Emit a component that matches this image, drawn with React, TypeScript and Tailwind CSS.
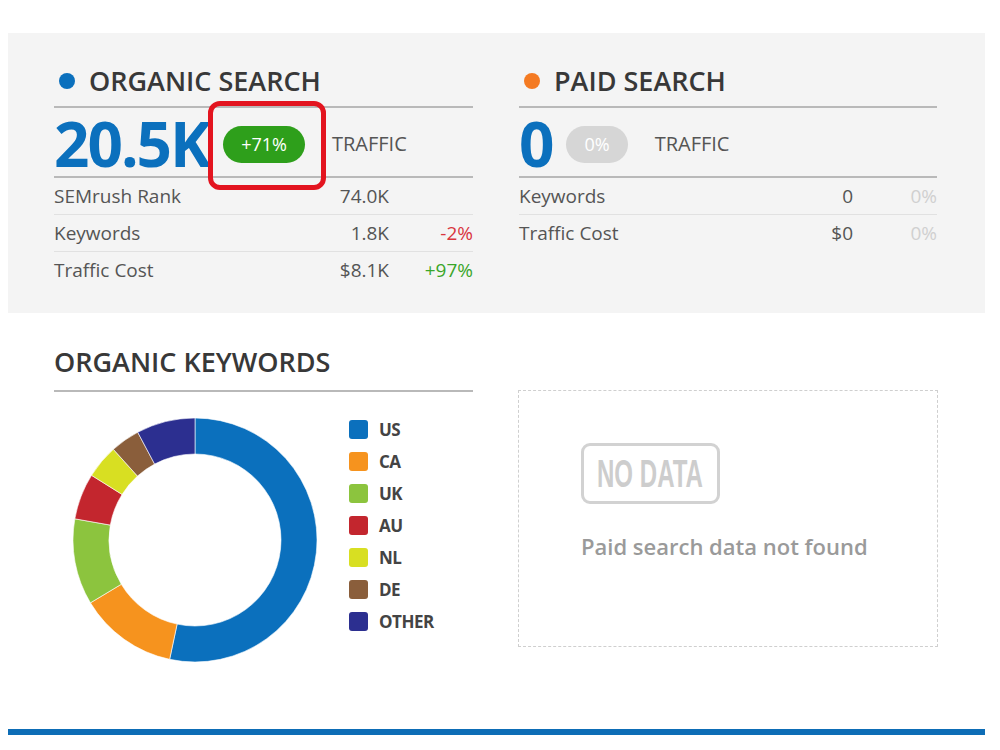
import React from "react";

const font = { fontFamily: '"Open Sans", "Noto Sans", sans-serif' };

const slices = [
  { label: "US", color: "#0b70bd", from: 0, to: 192 },
  { label: "CA", color: "#f6931e", from: 192, to: 239 },
  { label: "UK", color: "#8cc43e", from: 239, to: 280 },
  { label: "AU", color: "#c3262e", from: 280, to: 302 },
  { label: "NL", color: "#d8df22", from: 302, to: 318 },
  { label: "DE", color: "#8a5e3b", from: 318, to: 332 },
  { label: "OTHER", color: "#2c2f90", from: 332, to: 360 },
];

function polar(cx: number, cy: number, r: number, deg: number) {
  const a = ((deg - 90) * Math.PI) / 180;
  return [cx + r * Math.cos(a), cy + r * Math.sin(a)];
}

function arcPath(from: number, to: number) {
  const cx = 122;
  const cy = 122;
  const ro = 122;
  const ri = 86;
  const [x1, y1] = polar(cx, cy, ro, from);
  const [x2, y2] = polar(cx, cy, ro, to);
  const [x3, y3] = polar(cx, cy, ri, to);
  const [x4, y4] = polar(cx, cy, ri, from);
  const large = to - from > 180 ? 1 : 0;
  return `M ${x1} ${y1} A ${ro} ${ro} 0 ${large} 1 ${x2} ${y2} L ${x3} ${y3} A ${ri} ${ri} 0 ${large} 0 ${x4} ${y4} Z`;
}

function Donut() {
  return (
    <svg width="244" height="244" viewBox="0 0 244 244">
      {slices.map((s) => (
        <path key={s.label} d={arcPath(s.from, s.to)} fill={s.color} stroke="#ffffff" strokeWidth="0.6" />
      ))}
    </svg>
  );
}

// the "NO DATA" stamp is a condensed-type badge; squeeze real text to its width
function NoDataBadge() {
  return (
    <div className="h-[61px] w-[139px] rounded-[9px] border-[3px] border-[#d2d2d2]">
      <svg width="133" height="55" viewBox="0 0 133 55" overflow="visible">
        <text
          x="13"
          y="41"
          textLength="106"
          lengthAdjust="spacingAndGlyphs"
          fontFamily='"Liberation Sans Narrow", "Liberation Sans", Arial, sans-serif'
          fontWeight="700"
          fontSize="38"
          fill="#cdcdcd"
        >
          NO DATA
        </text>
      </svg>
    </div>
  );
}

type Row = { label: string; value: string; pct: string; pctClass: string };

function StatRow({ row, last }: { row: Row; last?: boolean }) {
  return (
    <div
      className={
        "flex h-[37px] items-center text-[19px] text-[#555] " + (last ? "" : "border-b border-[#e1e1e1]")
      }
    >
      <div className="flex-1">{row.label}</div>
      <div className="text-right">{row.value}</div>
      <div className={"w-[84px] text-right " + row.pctClass}>{row.pct}</div>
    </div>
  );
}

function SearchColumn({
  title,
  dot,
  big,
  pill,
  pillClass,
  rows,
  annotate,
}: {
  title: string;
  dot: string;
  big: string;
  pill: string;
  pillClass: string;
  rows: Row[];
  annotate?: boolean;
}) {
  return (
    <div>
      <div className="flex items-center gap-[14px] border-b-2 border-[#b9b9b9] pb-[7px]">
        <span className={"ml-[5px] h-[16px] w-[16px] rounded-full " + dot} />
        <span className="text-[27px] font-semibold leading-[36px] text-[#383838]">{title}</span>
      </div>
      <div className="relative flex h-[70px] items-center border-b-2 border-[#b9b9b9]">
        <span className="mt-[2px] text-[62px] font-bold leading-none tracking-[-2px] text-[#0b70bd]">{big}</span>
        <span
          className={
            "ml-[14px] mt-[4px] flex h-[37px] items-center rounded-full px-[18px] text-[18px] text-white " +
            pillClass
          }
        >
          {pill}
        </span>
        <span className="ml-[27px] mt-[4px] text-[20px] text-[#555]">TRAFFIC</span>
        {annotate && (
          <div className="absolute left-[154px] top-[-7px] h-[89px] w-[118px] rounded-[12px] border-[5px] border-[#e3141f]" />
        )}
      </div>
      {rows.map((r, i) => (
        <StatRow key={r.label} row={r} last={i === rows.length - 1} />
      ))}
    </div>
  );
}

export default function App() {
  return (
    <div className="min-h-[750px] w-[1000px] bg-white" style={font}>
      <div className="ml-[8px] w-[977px] pt-[33px]">
        <div className="grid h-[280px] grid-cols-[419px_418px] gap-x-[46px] bg-[#f4f4f4] pl-[46px] pt-[30px]">
          <SearchColumn
            title="ORGANIC SEARCH"
            dot="bg-[#0b70bd]"
            big="20.5K"
            pill="+71%"
            pillClass="bg-[#2e9f1b]"
            annotate
            rows={[
              { label: "SEMrush Rank", value: "74.0K", pct: "", pctClass: "" },
              { label: "Keywords", value: "1.8K", pct: "-2%", pctClass: "text-[#d9363e]" },
              { label: "Traffic Cost", value: "$8.1K", pct: "+97%", pctClass: "text-[#3aa62a]" },
            ]}
          />
          <SearchColumn
            title="PAID SEARCH"
            dot="bg-[#f47a22]"
            big="0"
            pill="0%"
            pillClass="bg-[#d6d6d6]"
            rows={[
              { label: "Keywords", value: "0", pct: "0%", pctClass: "text-[#d0d0d0]" },
              { label: "Traffic Cost", value: "$0", pct: "0%", pctClass: "text-[#d0d0d0]" },
            ]}
          />
        </div>

        <div className="grid grid-cols-[419px_420px] gap-x-[45px] pl-[46px] pt-[31px]">
          <div>
            <div className="border-b-2 border-[#b9b9b9] pb-[10px] text-[27px] font-semibold leading-[36px] text-[#383838]">
              ORGANIC KEYWORDS
            </div>
            <div className="flex pt-[26px]">
              <div className="ml-[19px]">
                <Donut />
              </div>
              <div className="ml-[32px] flex flex-col gap-[13px] pt-[2px]">
                {slices.map((s) => (
                  <div key={s.label} className="flex h-[19px] items-center gap-[11px]">
                    <span className="h-[19px] w-[19px] rounded-[3px]" style={{ backgroundColor: s.color }} />
                    <span className="text-[17px] font-bold tracking-[-0.5px] text-[#444]">{s.label}</span>
                  </div>
                ))}
              </div>
            </div>
          </div>
          <div className="pt-[46px]">
            <div className="h-[257px] border border-dashed border-[#cfcfcf] pl-[62px] pt-[52px]">
              <NoDataBadge />
              <div className="mt-[26px] text-[22px] font-semibold text-[#9a9a9a]">Paid search data not found</div>
            </div>
          </div>
        </div>

        <div className="mt-[67px] h-[6px] bg-[#0d6db6]" />
      </div>
    </div>
  );
}
